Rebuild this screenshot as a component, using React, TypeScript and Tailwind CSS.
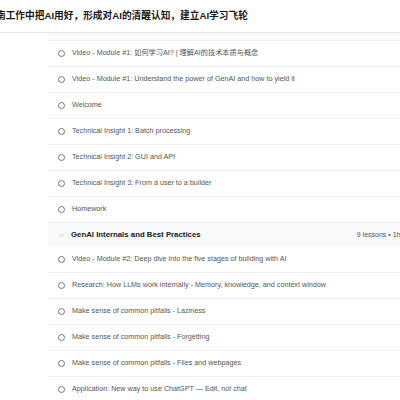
import React from "react";
import { ChevronDown } from "lucide-react";

interface Lesson {
  title: string;
}

const introLessons: Lesson[] = [
  { title: "Video - Module #1: 如何学习AI? | 理解AI的技术本质与概念" },
  { title: "Video - Module #1: Understand the power of GenAI and how to yield it" },
  { title: "Welcome" },
  { title: "Technical Insight 1: Batch processing" },
  { title: "Technical Insight 2: GUI and API" },
  { title: "Technical Insight 3: From a user to a builder" },
  { title: "Homework" },
];

const internalsLessons: Lesson[] = [
  { title: "Video - Module #2: Deep dive into the five stages of building with AI" },
  { title: "Research: How LLMs work internally - Memory, knowledge, and context window" },
  { title: "Make sense of common pitfalls - Laziness" },
  { title: "Make sense of common pitfalls - Forgetting" },
  { title: "Make sense of common pitfalls - Files and webpages" },
  { title: "Application: New way to use ChatGPT — Edit, not chat" },
];

const LessonRow: React.FC<{ lesson: Lesson }> = ({ lesson }) => (
  <div className="flex items-center h-[26px] border-b border-[#f0f0f0] pl-[10px] gap-[7px]">
    {/* --- Unchecked status circle --- */}
    <span className="w-[7px] h-[7px] rounded-full border border-[#777] flex-shrink-0" />
    <span className="text-[7.2px] text-[#555] whitespace-nowrap">{lesson.title}</span>
  </div>
);

const App: React.FC = () => {
  return (
    <div
      className="w-[400px] h-[400px] overflow-hidden bg-white"
      style={{ fontFamily: "'Liberation Sans', 'Noto Sans CJK SC', sans-serif" }}
    >
      {/* --- Course subtitle --- */}
      <div className="h-[33px] border-b border-[#e5e5e5] flex items-center overflow-hidden">
        <h1 className="-ml-[4px] text-[9.7px] font-bold text-[#1a1a1a] whitespace-nowrap">
          南工作中把AI用好，形成对AI的清醒认知，建立AI学习飞轮
        </h1>
      </div>

      {/* --- Curriculum panel --- */}
      <div className="ml-[48px] w-[380px]">
        <div className="h-[8px] bg-[#f8f9fa] border-b border-[#f0f0f0]" />

        {introLessons.map((lesson, i) => (
          <LessonRow key={i} lesson={lesson} />
        ))}

        {/* --- Section header --- */}
        <div className="flex items-center justify-between h-[24px] bg-[#f8f9fa] pl-[10px] pr-[12px]">
          <div className="flex items-center gap-[6px]">
            <ChevronDown className="w-[7px] h-[7px] text-[#999]" strokeWidth={2} />
            <span className="text-[7.8px] font-bold text-[#1a1a1a] whitespace-nowrap">
              GenAI Internals and Best Practices
            </span>
          </div>
          <span className="text-[7px] text-[#555] whitespace-nowrap">9 lessons • 1h 12m</span>
        </div>

        {internalsLessons.map((lesson, i) => (
          <LessonRow key={i} lesson={lesson} />
        ))}
      </div>
    </div>
  );
};

export default App;
